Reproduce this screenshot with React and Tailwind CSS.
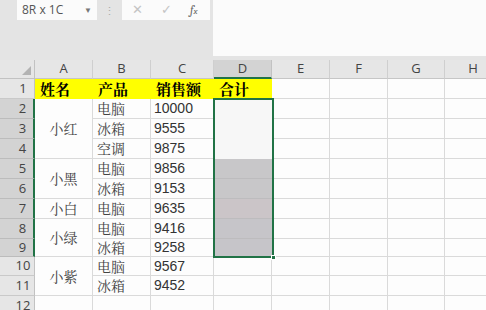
import React from 'react';

const CJK = "font-['Noto_Serif_CJK_SC','Noto_Sans_CJK_SC',serif]";
const NUM = "font-['Liberation_Sans',sans-serif]";
const UI = "font-['Open_Sans',sans-serif]";

// cell gridlines
const CELL = 'border-r border-b border-[#dadada] bg-[#fdfdfd]';

const columns = [
  { key: 'A', selected: false },
  { key: 'B', selected: false },
  { key: 'C', selected: false },
  { key: 'D', selected: true },
  { key: 'E', selected: false },
  { key: 'F', selected: false },
  { key: 'G', selected: false },
  { key: 'H', selected: false },
];

// sheet rows 2..11, name cells are merged vertically
const rows = [
  { row: 2, name: '小红', span: 3, product: '电脑', sales: 10000 },
  { row: 3, product: '冰箱', sales: 9555 },
  { row: 4, product: '空调', sales: 9875 },
  { row: 5, name: '小黑', span: 2, product: '电脑', sales: 9856 },
  { row: 6, product: '冰箱', sales: 9153 },
  { row: 7, name: '小白', span: 1, product: '电脑', sales: 9635 },
  { row: 8, name: '小绿', span: 2, product: '电脑', sales: 9416 },
  { row: 9, product: '冰箱', sales: 9258 },
  { row: 10, name: '小紫', span: 2, product: '电脑', sales: 9567 },
  { row: 11, product: '冰箱', sales: 9452 },
];

const spanClass = { 1: 'row-span-1', 2: 'row-span-2', 3: 'row-span-3' };

// fill of the selected range D2:D9
const selFills = [
  { h: 'h-[60px]', bg: 'bg-[#f7f7f7]' },
  { h: 'h-[20px]', bg: 'bg-[#c8c7c9] border-b border-[#bdbcbe]' },
  { h: 'h-[20px]', bg: 'bg-[#c8c7c9] border-b border-[#bdbcbe]' },
  { h: 'h-[20px]', bg: 'bg-[#cbc5c8] border-b border-[#bdbcbe]' },
  { h: 'h-[20px]', bg: 'bg-[#c6c5c9] border-b border-[#bdbcbe]' },
  { h: 'h-[18px]', bg: 'bg-[#c6c5c9]' },
];

function RowHeader({ n, selected }) {
  return (
    <div
      className={`flex items-center justify-center pl-[12px] text-[13px] text-[#444] ${UI} border-b ${
        selected
          ? 'bg-[#d3d3d3] border-b-[#bcbcbc] border-r-2 border-r-[#217346]'
          : 'bg-[#e6e6e6] border-b-[#c9c9c9] border-r border-r-[#c2c2c2]'
      }`}
    >
      {n}
    </div>
  );
}

function BlankCells({ count }) {
  return Array.from({ length: count }).map((_, i) => <div key={i} className={CELL} />);
}

export default function App() {
  return (
    <div className="w-[486px] h-[310px] overflow-hidden bg-[#fdfdfd] select-none">
      {/* formula bar */}
      <div className="flex h-[60px] bg-[#e4e4e4]">
        <div className="w-[210px]">
          <div className="flex h-5 items-center">
            <div className="ml-[17px] w-[80px] h-5 bg-[#fbfbfb] flex items-center justify-between pl-[5px] pr-[5px]">
              <span className={`text-[12px] text-[#555] ${UI}`}>8R x 1C</span>
              <span className="text-[8px] text-[#777]">▼</span>
            </div>
            <div className="w-[25px] flex justify-center text-[11px] leading-none text-[#aaa]">⋮</div>
            <div className="w-[88px] h-5 bg-[#fbfbfb] flex items-center">
              <span className="ml-[10px] text-[13px] text-[#c4c4c4]">✕</span>
              <span className="ml-[18px] text-[13px] text-[#c4c4c4]">✓</span>
              <span className="ml-[18px] text-[12px] italic font-serif text-[#666]">
                f<span className="text-[9px]">x</span>
              </span>
            </div>
          </div>
        </div>
        <div className="ml-[3px] flex-1 h-[56px] bg-[#fbfbfb]" />
      </div>

      {/* sheet */}
      <div className="grid grid-cols-[35px_58px_58px_63px_58px_58px_58px_57px_57px] grid-rows-[19px_20px_20px_20px_20px_20px_20px_20px_20px_18px_19px_20px_20px]">
        {/* column headers */}
        <div className="relative bg-[#e6e6e6] border-r border-b border-[#c2c2c2]">
          <svg className="absolute right-[3px] bottom-[3px]" width="9" height="9" viewBox="0 0 9 9">
            <polygon points="9,0 9,9 0,9" fill="#b3b3b3" />
          </svg>
        </div>
        {columns.map((c) => (
          <div
            key={c.key}
            className={`flex items-center justify-center text-[13px] ${UI} ${
              c.selected
                ? 'bg-[#d3d3d3] text-[#444] border-b-2 border-b-[#217346] border-r border-r-[#c2c2c2]'
                : 'bg-[#e6e6e6] text-[#444] border-b border-b-[#c6c6c6] border-r border-r-[#cfcfcf]'
            }`}
          >
            {c.key}
          </div>
        ))}

        {/* row 1 - header */}
        <RowHeader n={1} selected={false} />
        {['姓名', '产品', '销售额', '合计'].map((t) => (
          <div
            key={t}
            className={`flex items-center pl-[5px] bg-[#ffff00] text-[15px] font-bold text-black ${CJK}`}
          >
            {t}
          </div>
        ))}
        <BlankCells count={4} />

        {/* data rows */}
        {rows.map((r) => (
          <React.Fragment key={r.row}>
            <RowHeader n={r.row} selected={r.row >= 2 && r.row <= 9} />
            {r.name && (
              <div
                className={`${spanClass[r.span]} ${CELL} flex items-center justify-center text-[14px] text-[#444] ${CJK}`}
              >
                {r.name}
              </div>
            )}
            <div className={`${CELL} flex items-center pl-[4px] text-[14px] text-[#444] ${CJK}`}>
              {r.product}
            </div>
            <div className={`${CELL} flex items-center pl-[3px] text-[14px] text-[#333] ${NUM}`}>
              {r.sales}
            </div>
            {r.row === 2 && (
              <div className="row-span-8 relative flex flex-col">
                {selFills.map((f, i) => (
                  <div key={i} className={`${f.h} ${f.bg}`} />
                ))}
                <div className="absolute -left-px -top-px right-[-2px] bottom-[-1px] border-2 border-[#217346]" />
                <div className="absolute right-[-4px] bottom-[-3px] w-[5px] h-[5px] bg-[#217346] border border-white" />
              </div>
            )}
            {r.row >= 10 && <div className={CELL} />}
            <BlankCells count={4} />
          </React.Fragment>
        ))}

        {/* row 12 */}
        <RowHeader n={12} selected={false} />
        <BlankCells count={8} />
      </div>
    </div>
  );
}
